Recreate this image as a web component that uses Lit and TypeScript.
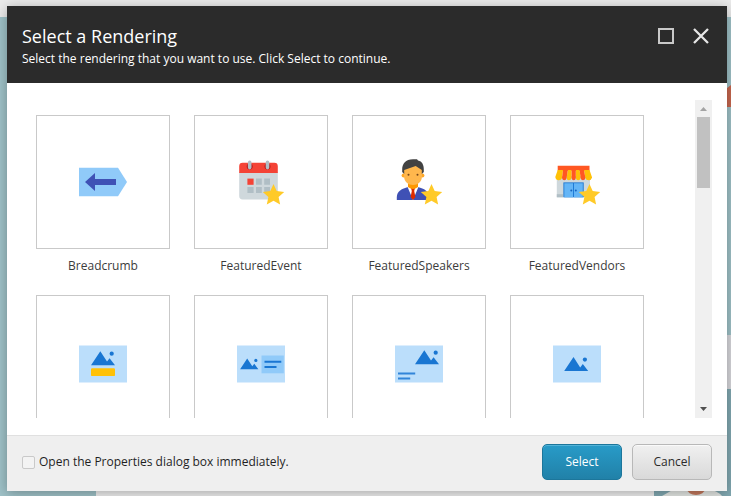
import { LitElement, html, css, svg } from "lit";
import { customElement } from "lit/decorators.js";

const star = svg`<path fill="#ffca28" d="M36.5 26l3.2 7 7.5.9-5.6 5.1 1.5 7.5-6.6-3.7-6.7 3.7 1.6-7.5-5.6-5.1 7.5-.9z"/>`;
const mountain = svg`<path fill="#1976d2" d="M21.3 13.2L12 27.2H36L30.6 20.2l-2.6 3.3z"/><circle cx="32.7" cy="15.7" r="2.1" fill="#1976d2"/>`;
const panel = svg`<path fill="#bbdefb" d="M0 7.6h48v37H0z"/>`;

const icons = {
  breadcrumb: svg`<path fill="#90caf9" d="M0 9.7h39L48 24l-9 14.2H0z"/>
    <path fill="#3f51b5" d="M6 24l10-9v6h21v6H16v6z"/>`,
  event: svg`<path fill="#cfd8dc" d="M2.2 14h38.6v24a3.4 3.4 0 0 1-3.4 3.4H5.6A3.4 3.4 0 0 1 2.2 38z"/>
    <path fill="#f44336" d="M2.2 15V8.2a3.4 3.4 0 0 1 3.4-3.4h31.8a3.4 3.4 0 0 1 3.4 3.4V15z"/>
    <circle cx="12.7" cy="8.6" r="3" fill="#b71c1c"/><circle cx="30.5" cy="8.6" r="3" fill="#b71c1c"/>
    <path stroke="#b0bec5" stroke-width="3.6" stroke-linecap="round" d="M12.7 4.4v5.2M30.5 4.4v5.2"/>
    <path fill="#f44336" d="M10.4 20.6h6.2v6.2h-6.2z"/>
    <path fill="#b0bec5" d="M19 20.6h5.8v6.2H19zM27.2 20.6H33v6.2h-5.8zM10.4 29h6.2v6h-6.2zM19 29h5.8v6H19zM27.2 29H33v6h-5.8z"/>${star}`,
  speaker: svg`<path fill="#3f51b5" d="M1.8 42v-3c0-6 5.2-8.2 11.2-10h10c6 1.800 11 4 11 10v3z"/>
    <path fill="#fff" d="M12.600 29h10.800L18 42z"/><path fill="#dd2c00" d="M16 30h4l-.8 3 1.200 6L18 42l-2.400-3 1.200-6z"/>
    <path fill="#ff9800" d="M13 24h10v5q-5 4-10 0z"/>
    <circle cx="8.600" cy="17.500" r="2" fill="#ffa726"/><circle cx="27.400" cy="17.500" r="2" fill="#ffa726"/>
    <path fill="#ffb74d" d="M9 10q9-6 18 0v8c0 12-18 12-18 0z"/>
    <path fill="#424242" d="M18 1.200C10.500 1.200 7.200 6 7.200 11v3l2 2v-4l11.500-4 6.100 4v4l2-2v-2.500c0-4.500-1.600-8.200-5.800-9L22 1.200z"/>
    <circle cx="13.500" cy="16.700" r="1" fill="#784719"/><circle cx="22.500" cy="16.700" r="1" fill="#784719"/>${star}`,
  vendor: svg`<path fill="#cfd8dc" d="M3.800 18H37v21.300H3.800z"/><path fill="#b0bec5" d="M3.800 36.200H10v3.100H3.800z"/>
    <path fill="#1976d2" d="M10.400 24.400h20.300v14.900H10.400z"/>
    <path fill="#64b5f6" d="M11.300 25.300h8.800v14h-8.800zM21 25.300h8.800v14H21z"/>
    <circle cx="18.300" cy="32.500" r="1" fill="#1565c0"/><circle cx="22.800" cy="32.500" r="1" fill="#1565c0"/>
    <path fill="#ff5722" d="M4.700 7.700h31.800v5H4.700z"/>
    <path fill="#ffc107" d="M4.700 12h5.300l-1 8q-.5 2.200-3.300 2.200T2.300 19zM14.800 12h3.800v8q-.5 2.200-2.700 2.200T13.600 20zM22.800 12h3.800l1 8q-.4 2.200-2.400 2.200T22.800 20zM31 12h5.500l2.600 7.500q-.7 2.700-3.400 2.700T32.400 20z"/>
    <path fill="#ff5722" d="M10 12h4.800l-1.200 8q-.5 2.200-2.300 2.200T9 20zM18.600 12h4.200v8q-.3 2.200-2.100 2.200T18.600 20zM26.600 12H31l1.400 8q-.5 2.200-2.400 2.200T27.600 20z"/>${star}`,
  banner: svg`${panel}${mountain}<rect x="12" y="30.300" width="24" height="7.800" rx="1.200" fill="#ffc107"/>`,
  teaser: svg`${panel}<g transform="translate(-6 10.500) scale(.76)">${mountain}</g>
    <path fill="#90caf9" d="M24.500 17.500h22.300v17.800H24.500z"/>
    <path fill="#1976d2" d="M27.500 22.700h16.800v2.100H27.500zM27.500 28h12v2.100h-12z"/>`,
  promo: svg`${panel}<g transform="translate(8 -1)">${mountain}</g>
    <path fill="#1976d2" opacity=".85" d="M3 34.400h17.200v2H3zM3 39.400h12.200v2H3z"/>`,
  image: svg`${panel}<g transform="translate(-.8 5.900)">${mountain}</g>`,
};

const renderings = [
  { name: "Breadcrumb", icon: icons.breadcrumb },
  { name: "FeaturedEvent", icon: icons.event },
  { name: "FeaturedSpeakers", icon: icons.speaker },
  { name: "FeaturedVendors", icon: icons.vendor },
  { name: "", icon: icons.banner },
  { name: "", icon: icons.teaser },
  { name: "", icon: icons.promo },
  { name: "", icon: icons.image },
];

@customElement("app-root")
export class AppRoot extends LitElement {
  static styles = css`
    :host { display: block; position: relative; width: 731px; height: 496px; overflow: hidden;
      font: 12px/16px "Open Sans", sans-serif; color: #2b2b2b; background: #9fc2c8; }
    * { box-sizing: border-box; }
    .backdrop { position: absolute; inset: 0; width: 731px; height: 496px; }
    .dialog { position: relative; margin: 6px 4px 5px 7px; height: 485px; display: flex; flex-direction: column;
      background: #fff; box-shadow: 0 2px 12px rgba(0,0,0,.3); }
    header { height: 77px; flex: none; background: #2b2b2b; color: #fff; padding: 18px 17px 0 15px;
      display: flex; justify-content: space-between; }
    h1 { margin: 0; font-size: 18px; line-height: 25px; font-weight: 400; }
    p { margin: 2px 0 0; }
    .controls { display: flex; gap: 18px; padding-top: 4px; height: 20px; }
    .controls svg { display: block; }
    .body { flex: 1; min-height: 0; padding: 17px 15px 17px 29px; display: flex; justify-content: space-between; }
    .grid { display: grid; grid-template-columns: repeat(4, 134px); column-gap: 24px; grid-auto-rows: 180px;
      overflow: hidden; padding-top: 15px; height: 318px; }
    .tile { height: 134px; border: 1px solid #c9c9c9; display: flex; align-items: center; justify-content: center; }
    .name { text-align: center; margin-top: 9px; color: #3c3c3c; }
    .scrollbar { width: 17px; height: 318px; background: #f0f0f0; display: flex; flex-direction: column; align-items: center; }
    .arrow { width: 17px; height: 17px; display: block; flex: none; }
    .thumb { width: 13px; height: 71px; background: #c1c1c1; margin-bottom: auto; }
    footer { height: 56px; flex: none; background: #efefef; border-top: 1px solid #e0e0e0; display: flex;
      align-items: center; padding: 0 15px 3px; color: #1f1f1f; }
    .check { width: 13px; height: 13px; border: 1px solid #c9c9c9; border-radius: 2px; background: #f3f3f3; margin: 0 4px 0 0; }
    .option { display: flex; align-items: center; margin-right: auto; }
    button { width: 80px; height: 36px; margin-left: 10px; padding: 0; border-radius: 5px; font: inherit; color: #2b2b2b;
      border: 1px solid #b8b8b8; background: linear-gradient(#f0f0f0, #d9d9d9); box-shadow: inset 0 1px #fafafa; }
    .primary { color: #fff; border-color: #1c769b; background: linear-gradient(#289bc8, #2181a8);
      box-shadow: inset 0 1px #53b3d8; }
  `;

  render() {
    return html`
      <svg class="backdrop" viewBox="0 0 731 496">
        <path fill="#ebebeb" d="M0 0h731v17H0z"/>
        <path fill="#eee" d="M96 480h558v16H96z"/>
        <path fill="#c8674f" d="M722 92l9-7v22h-9z"/>
        <path fill="#d8d8dc" d="M720 335h11v54h-11z"/>
        <path fill="#82a9b2" d="M720 389h11v107h-11zM654 480h77v16h-77z"/>
        <path fill="#e4e7e4" d="M662 496l14-8h30q12 3 16 8z"/>
        <ellipse cx="696" cy="489" rx="9" ry="6" fill="#c4795d"/>
      </svg>
      <div class="dialog">
        <header>
          <div><h1>Select a Rendering</h1><p>Select the rendering that you want to use. Click Select to continue.</p></div>
          <div class="controls">
            <svg width="16" height="16"><path d="M1 1h14v14H1z" fill="none" stroke="#c9c9c9" stroke-width="2"/></svg>
            <svg width="18" height="16"><path d="M2 1l14 14M16 1L2 15" fill="none" stroke="#e6e6e6" stroke-width="2.300"/></svg>
          </div>
        </header>
        <div class="body">
          <div class="grid">
            ${renderings.map(r => html`<div>
              <div class="tile"><svg width="48" height="48" viewBox="0 0 48 48">${r.icon}</svg></div>
              <div class="name">${r.name}</div>
            </div>`)}
          </div>
          <div class="scrollbar">
            <svg class="arrow"><path fill="#a3a3a3" d="M5 11l3.500-4 3.500 4z"/></svg>
            <div class="thumb"></div>
            <svg class="arrow"><path fill="#505050" d="M5 6h7l-3.500 4z"/></svg>
          </div>
        </div>
        <footer>
          <div class="option"><span class="check"></span>Open the Properties dialog box immediately.</div>
          <button class="primary">Select</button><button>Cancel</button>
        </footer>
      </div>`;
  }
}
